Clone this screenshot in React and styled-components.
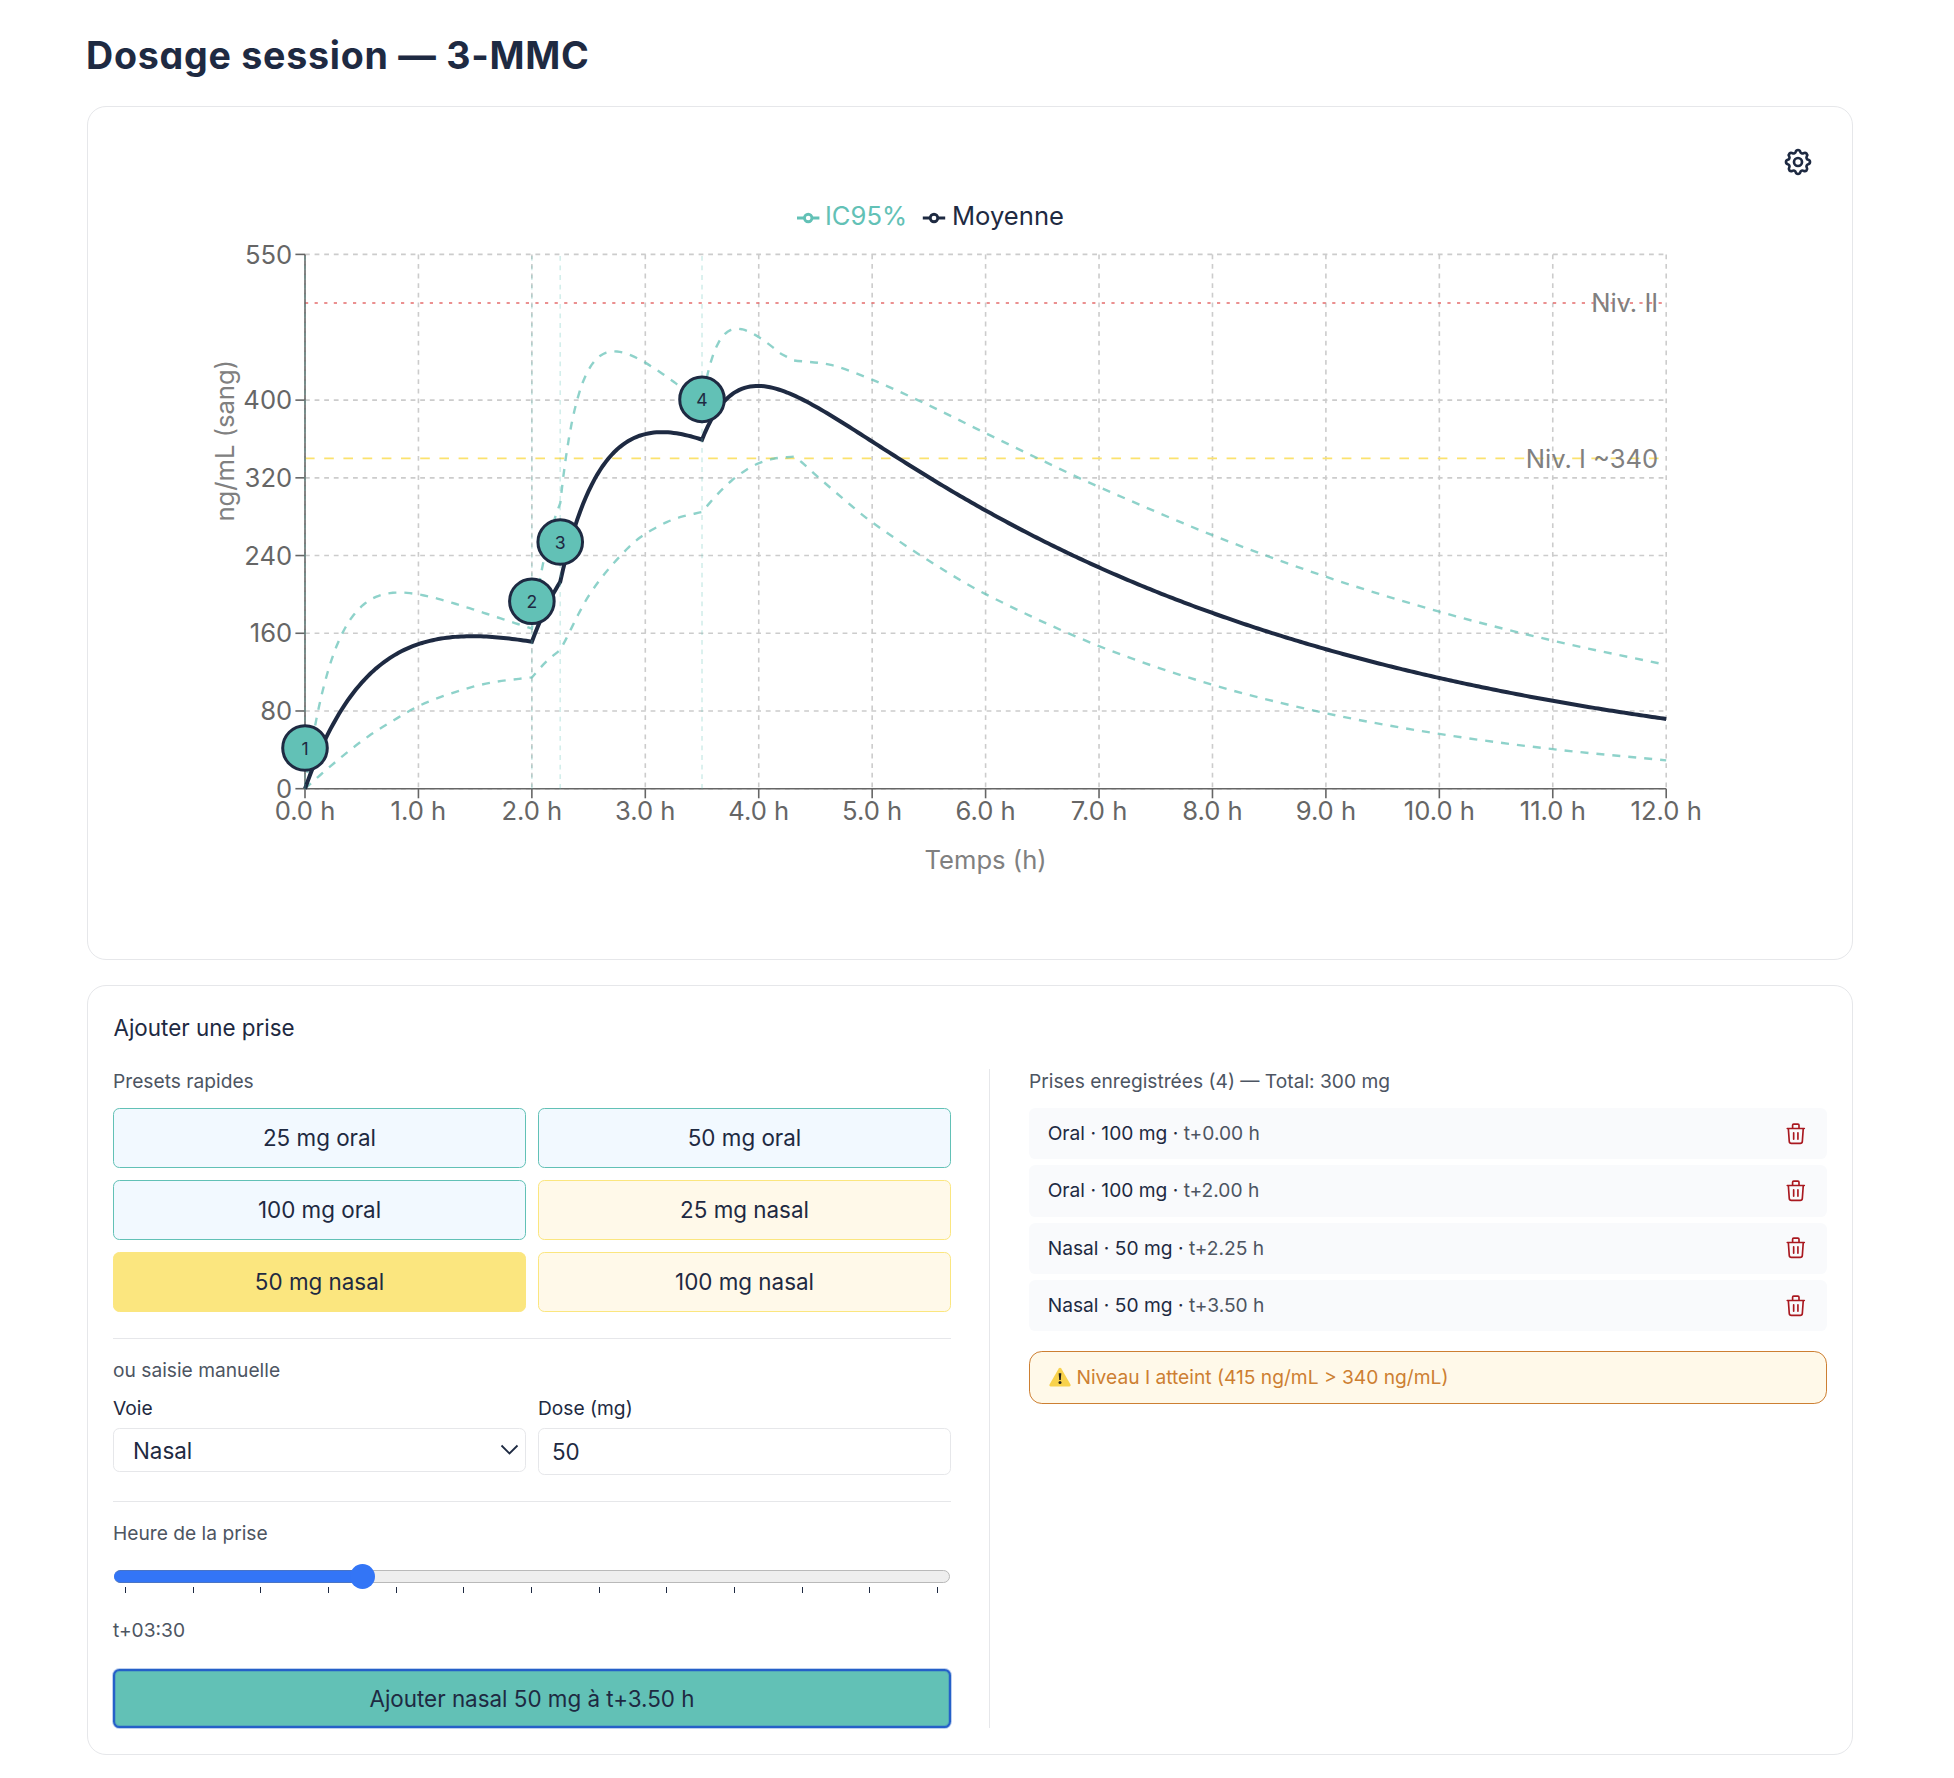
import React from "react";
import styled, { createGlobalStyle } from "styled-components";
import { HiOutlineCog, HiOutlineTrash } from "react-icons/hi";

const color = {
  navy: "#1e2a42",
  teal: "#62c1b6",
  yellow: "#fbe67f",
  cream: "#fff9e9",
  ice: "#f2f9ff",
  muted: "#4d5562",
  line: "#e6e7ea",
  bronze: "#cd7f32",
  danger: "#a9181f",
  blue: "#3375f6",
};

const GlobalStyle = createGlobalStyle`
  *, *::before, *::after { box-sizing: border-box; }
  body {
    margin: 0;
    background: #fff;
    color: ${color.navy};
    font-family: Inter, "Liberation Sans", sans-serif;
    font-size: 22.4px;
  }
  button, input, select { font: inherit; color: inherit; }
`;

const Page = styled.main`
  padding: 31px 101px 23px 87px;
  display: flex;
  flex-direction: column;
`;

const PageTitle = styled.h1`
  margin: 0 0 26px -1px;
  font-size: 37.6px;
  font-weight: 650;
  line-height: 49px;
  letter-spacing: 0.75px;
  font-feature-settings: "cv11";
  white-space: nowrap;
`;

const Card = styled.section`
  position: relative;
  border: 1px solid ${color.line};
  border-radius: 19px;
  background: #fff;
  padding: ${(p) => p.$padding || "0"};
  & + & { margin-top: 25px; }
`;

const ChartSvg = styled.svg`
  display: block;
  width: 1764px;
  height: 852px;
  font-size: 25.6px;
`;

const GearButton = styled.button`
  position: absolute;
  top: 39px;
  right: 38px;
  width: 32px;
  height: 32px;
  padding: 0;
  border: 0;
  background: none;
  display: grid;
  place-items: center;
`;

const SectionTitle = styled.h2`
  margin: 0 0 25px 0.5px;
  font-size: 22.4px;
  font-weight: 400;
  line-height: 32px;
`;

const Columns = styled.div`
  display: grid;
  grid-template-columns: 1fr 1fr;
  gap: 38px;
`;

const Column = styled.div`
  display: flex;
  flex-direction: column;
  ${(p) => p.$divided && `border-left: 1px solid ${color.line}; padding-left: 39px;`}
`;

const Label = styled.div`
  font-size: 19.2px;
  line-height: 24px;
  color: ${(p) => (p.$strong ? color.navy : color.muted)};
  margin-top: ${(p) => p.$top || 0}px;
`;

const Presets = styled.div`
  margin-top: 15px;
  display: grid;
  grid-template-columns: 1fr 1fr;
  grid-auto-rows: 59.5px;
  gap: 12.5px 12px;
`;

const Preset = styled.button`
  border: 1px solid ${(p) => (p.$route === "oral" ? color.teal : color.yellow)};
  background: ${(p) =>
    p.$active ? color.yellow : p.$route === "oral" ? color.ice : color.cream};
  border-radius: 6.4px;
  padding: 0;
`;

const Rule = styled.hr`
  border: 0;
  width: 100%;
  height: 1px;
  background: ${color.line};
  margin: ${(p) => p.$top}px 0 19px;
`;

const Fields = styled.div`
  margin-top: 14px;
  display: grid;
  grid-template-columns: 1fr 1fr;
  gap: 12px;
  align-items: start;
`;

const Field = styled.div`
  display: flex;
  flex-direction: column;
  gap: 8px;
`;

const SelectBox = styled.div`
  height: 44px;
  border: 1px solid ${color.line};
  border-radius: 6.4px;
  padding: 0 6px 0 19px;
  display: flex;
  align-items: center;
  justify-content: space-between;
`;

const NumberInput = styled.input`
  height: 47px;
  width: 100%;
  border: 1px solid ${color.line};
  border-radius: 6.4px;
  padding: 0 13px;
  background: #fff;
  outline: none;
`;

const Slider = styled.div`
  margin-top: 25px;
  padding: 0 1px;
`;

const Track = styled.div`
  position: relative;
  height: 13px;
  border: 1px solid #b9b9b9;
  border-radius: 7px;
  background: #eee;
`;

const Fill = styled.div`
  position: absolute;
  inset: -1px auto -1px -1px;
  width: 250px;
  border: 1px solid #4a74c4;
  border-right: 0;
  border-left-color: ${color.blue};
  border-radius: 7px 0 0 7px;
  background: ${color.blue};
`;

const Thumb = styled.div`
  position: absolute;
  left: 235px;
  top: -7px;
  width: 25px;
  height: 25px;
  border-radius: 50%;
  background: ${color.blue};
`;

const Ticks = styled.div`
  margin-top: 4px;
  padding: 0 12px 0 11px;
  display: flex;
  justify-content: space-between;
`;

const Tick = styled.span`
  width: 1px;
  height: 6px;
  background: ${color.navy};
`;

const SubmitButton = styled.button`
  margin-top: 27px;
  height: 59px;
  border: 2px solid #2560c8;
  border-radius: 6.4px;
  box-shadow: 0 0 0 1px rgba(37, 96, 200, 0.3), inset 0 0 0 1px rgba(37, 96, 200, 0.25);
  background: ${color.teal};
  padding: 0;
`;

const DoseList = styled.ul`
  list-style: none;
  margin: 15px 0 0;
  padding: 0;
  display: flex;
  flex-direction: column;
  gap: 6.2px;
`;

const DoseRow = styled.li`
  height: 51.2px;
  border-radius: 6.4px;
  background: #f9fafc;
  padding: 0 18px 0 18.7px;
  display: flex;
  align-items: center;
  justify-content: space-between;
  font-size: 19.2px;
`;

const DoseText = styled.span`
  padding-bottom: 1.6px;
`;

const DoseTime = styled.span`
  color: ${color.muted};
`;

const TrashIcon = styled(HiOutlineTrash)`
  width: 25.6px;
  height: 25.6px;
  margin-bottom: 0.6px;
  color: ${color.danger};
  path { stroke-width: 1.55px; }
`;

const Warning = styled.div`
  margin-top: 20px;
  height: 53px;
  border: 1px solid ${color.bronze};
  border-radius: 12.8px;
  background: ${color.cream};
  color: ${color.bronze};
  padding: 0 19px 1.5px;
  display: flex;
  align-items: center;
  gap: 5.5px;
  font-size: 19.2px;
`;

/* ---------- chart geometry ---------- */
const X0 = 305;
const X1 = 1666.2;
const Y0 = 788.7;
const Y1 = 254.4;
const px = (t) => X0 + (t * (X1 - X0)) / 12;
const py = (c) => Y0 - (c * (Y0 - Y1)) / 550;

const doses = [
  { t: 0, route: "Oral", mg: 100, marker: 748 },
  { t: 2, route: "Oral", mg: 100, marker: 601.3 },
  { t: 2.25, route: "Nasal", mg: 50, marker: 542 },
  { t: 3.5, route: "Nasal", mg: 50, marker: 399.4 },
];

const concentration = (t, oral, nasal) =>
  doses.reduce((sum, d) => {
    const dt = t - d.t;
    if (dt <= 0) return sum;
    const p = d.route === "Oral" ? oral : nasal;
    return sum + p.amp * (Math.exp(-0.231 * dt) - Math.exp(-p.ka * dt));
  }, 0);

const point = (t, c) => `${px(t).toFixed(2)},${py(c).toFixed(2)}`;

const sampled = (from, to, fn) => {
  const out = [];
  const n = Math.round((to - from) / 0.025);
  for (let i = 0; i <= n; i++) {
    const t = from + ((to - from) * i) / n;
    out.push(point(t, fn(t)));
  }
  return out.join(" L");
};

/* Hermite spline through (t, value) pairs, as cubic segments */
const spline = (pts) => {
  const n = pts.length;
  const slope = pts.map((p, i) => {
    if (i === 0 || i === n - 1) {
      const [a, b] = i === 0 ? [pts[0], pts[1]] : [pts[n - 2], pts[n - 1]];
      return (b[1] - a[1]) / (b[0] - a[0]);
    }
    return (pts[i + 1][1] - pts[i - 1][1]) / (pts[i + 1][0] - pts[i - 1][0]);
  });
  let d = "";
  for (let i = 0; i < n - 1; i++) {
    const [ta, ca] = pts[i];
    const [tb, cb] = pts[i + 1];
    const h = (tb - ta) / 3;
    d += ` C${point(ta + h, ca + slope[i] * h)} ${point(tb - h, cb - slope[i + 1] * h)} ${point(tb, cb)}`;
  }
  return d;
};

const meanPath =
  "M" +
  sampled(0, 12, (t) => concentration(t, { amp: 260.8, ka: 1.5 }, { amp: 120.6, ka: 3 }));

const upperPath =
  "M" +
  sampled(0, 4.2, (t) => concentration(t, { amp: 262, ka: 3.5 }, { amp: 129, ka: 6.5 })) +
  ` L${point(4.31, 440.8)}` +
  spline([
    [4.31, 440.8], [4.635, 436.2], [5, 421], [5.5, 394.6], [6, 366], [6.5, 337.8], [7, 310.6],
    [8, 261], [9, 218.2], [10, 182.2], [11, 152.4], [12, 127.5],
  ]);

const lowerPath =
  `M${point(0, 0)}` +
  spline([[0, 0], [0.114, 12], [0.334, 33.8], [0.56, 54], [0.79, 71], [1, 85], [1.216, 95.2], [1.483, 105], [1.7, 110.3], [2, 114.6]]) +
  spline([[2, 114.6], [2.12, 130], [2.25, 143]]) +
  spline([[2.25, 143], [2.301, 154], [2.41, 179.5], [2.498, 198], [2.645, 221.7], [2.836, 246.5], [2.953, 258.6], [3.056, 266.3], [3.189, 274.4], [3.321, 280], [3.5, 284.8]]) +
  spline([[3.5, 284.8], [3.57, 294.5], [3.66, 306], [3.762, 317.3], [3.879, 327.4], [3.982, 334], [4.129, 339.6], [4.31, 341.8]]) +
  spline([[4.31, 341.8], [4.379, 336], [4.511, 322], [4.82, 291], [5, 274.2], [5.462, 237.5], [6, 200.3], [7, 146.8], [8, 107], [9, 77.7], [10, 56.4], [11, 40.7], [12, 29.2]]);

const yTicks = [0, 80, 160, 240, 320, 400, 550];
const hours = Array.from({ length: 13 }, (_, i) => i);

const LegendMark = ({ x, stroke }) => (
  <g fill="none" stroke={stroke} strokeWidth="2.8">
    <path d={`M${x} 218h7.4m7.5 0h7.5`} />
    <circle cx={x + 11.2} cy="218" r="3.75" />
  </g>
);

const Chart = () => (
  <ChartSvg viewBox="88 107 1764 852">
    <g stroke="#ccc" strokeWidth="1.6" strokeDasharray="4.8 4.8">
      {yTicks.map((v) => (
        <line key={v} x1={X0} x2={X1} y1={py(v)} y2={py(v)} />
      ))}
      {hours.map((h) => (
        <line key={h} x1={px(h)} x2={px(h)} y1={Y1} y2={Y0} />
      ))}
    </g>
    <line x1={X0} x2={X1} y1={py(500)} y2={py(500)} stroke="#e56c6c" strokeWidth="1.6" strokeDasharray="3.2 6.4" />
    <line x1={X0} x2={X1} y1={py(340)} y2={py(340)} stroke="#fbe26e" strokeWidth="1.6" strokeDasharray="9.6 9.6" />
    <g stroke="#666" strokeWidth="1.6">
      <line x1={X0} x2={X0} y1={Y1} y2={Y0} />
      <line x1={X0} x2={X1} y1={Y0} y2={Y0} />
      {yTicks.map((v) => (
        <line key={v} x1={X0 - 9.6} x2={X0} y1={py(v)} y2={py(v)} />
      ))}
      {hours.map((h) => (
        <line key={h} x1={px(h)} x2={px(h)} y1={Y0} y2={Y0 + 9.6} />
      ))}
    </g>
    <g fill="#666">
      {yTicks.map((v) => (
        <text key={v} x={X0 - 12.8} y={py(v) + 9.1} textAnchor="end">{v}</text>
      ))}
      {hours.map((h) => (
        <text key={h} x={px(h)} y="819.6" textAnchor="middle">{h.toFixed(1)} h</text>
      ))}
    </g>
    <g fill="none" stroke={color.teal} strokeOpacity="0.72" strokeWidth="2.4" strokeDasharray="8 8">
      <path d={upperPath} />
      <path d={lowerPath} />
    </g>
    <path d={meanPath} fill="none" stroke={color.navy} strokeWidth="4" />
    <g stroke={color.teal} strokeOpacity="0.28" strokeWidth="1.6" strokeDasharray="4.8 4.8">
      {doses.map((d) => (
        <line key={d.t} x1={px(d.t)} x2={px(d.t)} y1={Y0} y2={Y1} />
      ))}
    </g>
    <g fill="#808080">
      <text x="1658.2" y={py(500) + 9.1} textAnchor="end">Niv. II</text>
      <text x="1658.2" y={py(340) + 9.1} textAnchor="end">Niv. I ~340</text>
      <text x={(X0 + X1) / 2} y="869" textAnchor="middle">Temps (h)</text>
      <text transform="translate(234 521.5) rotate(-90)">ng/mL (sang)</text>
    </g>
    {doses.map((d, i) => (
      <g key={d.t}>
        <circle cx={px(d.t)} cy={d.marker} r="22.3" fill={color.teal} stroke={color.navy} strokeWidth="3" />
        <text x={px(d.t)} y={d.marker + 6.6} textAnchor="middle" fontSize="17.6" fill={color.navy}>
          {i + 1}
        </text>
      </g>
    ))}
    <LegendMark x={797} stroke={color.teal} />
    <text x="825" y="225.2" fill={color.teal}>IC95%</text>
    <LegendMark x={922.8} stroke={color.navy} />
    <text x="952" y="225.2" fill={color.navy}>Moyenne</text>
  </ChartSvg>
);

const WarningSign = () => (
  <svg width="22" height="20" viewBox="0 0 22 20">
    <path d="M11 .8c.6 0 1 .3 1.3.8l9.2 16c.5 1-.1 1.9-1.2 1.9H1.7C.6 19.5 0 18.6.5 17.6l9.2-16C10 1.1 10.4.8 11 .8z" fill="#f8d24c" />
    <path d="M9.7 6.2h2.6l-.5 6.8h-1.6z" fill="#23221d" />
    <circle cx="11" cy="15.5" r="1.5" fill="#23221d" />
  </svg>
);

const Chevron = () => (
  <svg width="19" height="12" viewBox="0 0 19 12" fill="none">
    <path d="M1.5 1.5l8 8 8-8" stroke={color.navy} strokeWidth="1.8" />
  </svg>
);

const presets = [
  { mg: 25, route: "oral" },
  { mg: 50, route: "oral" },
  { mg: 100, route: "oral" },
  { mg: 25, route: "nasal" },
  { mg: 50, route: "nasal", active: true },
  { mg: 100, route: "nasal" },
];

export default function App() {
  return (
    <>
      <GlobalStyle />
      <Page>
        <PageTitle>Dosage session — 3-MMC</PageTitle>

        <Card>
          <Chart />
          <GearButton aria-label="Paramètres">
            <HiOutlineCog size={32} />
          </GearButton>
        </Card>

        <Card $padding="26px 25px 26px 25px">
          <SectionTitle>Ajouter une prise</SectionTitle>
          <Columns>
            <Column>
              <Label>Presets rapides</Label>
              <Presets>
                {presets.map((p) => (
                  <Preset key={p.mg + p.route} $route={p.route} $active={p.active}>
                    {p.mg} mg {p.route}
                  </Preset>
                ))}
              </Presets>

              <Rule $top={26.5} />
              <Label>ou saisie manuelle</Label>
              <Fields>
                <Field>
                  <Label $strong>Voie</Label>
                  <SelectBox>
                    <span>Nasal</span>
                    <Chevron />
                  </SelectBox>
                </Field>
                <Field>
                  <Label $strong>Dose (mg)</Label>
                  <NumberInput defaultValue="50" />
                </Field>
              </Fields>

              <Rule $top={26} />
              <Label>Heure de la prise</Label>
              <Slider>
                <Track>
                  <Fill />
                  <Thumb />
                </Track>
                <Ticks>
                  {hours.map((h) => (
                    <Tick key={h} />
                  ))}
                </Ticks>
              </Slider>
              <Label $top={25}>t+03:30</Label>
              <SubmitButton>Ajouter nasal 50 mg à t+3.50 h</SubmitButton>
            </Column>

            <Column $divided>
              <Label>Prises enregistrées (4) — Total: 300 mg</Label>
              <DoseList>
                {doses.map((d) => (
                  <DoseRow key={d.t}>
                    <DoseText>
                      {d.route} · {d.mg} mg · <DoseTime>t+{d.t.toFixed(2)} h</DoseTime>
                    </DoseText>
                    <TrashIcon />
                  </DoseRow>
                ))}
              </DoseList>
              <Warning>
                <WarningSign />
                <span>Niveau I atteint (415 ng/mL &gt; 340 ng/mL)</span>
              </Warning>
            </Column>
          </Columns>
        </Card>
      </Page>
    </>
  );
}
